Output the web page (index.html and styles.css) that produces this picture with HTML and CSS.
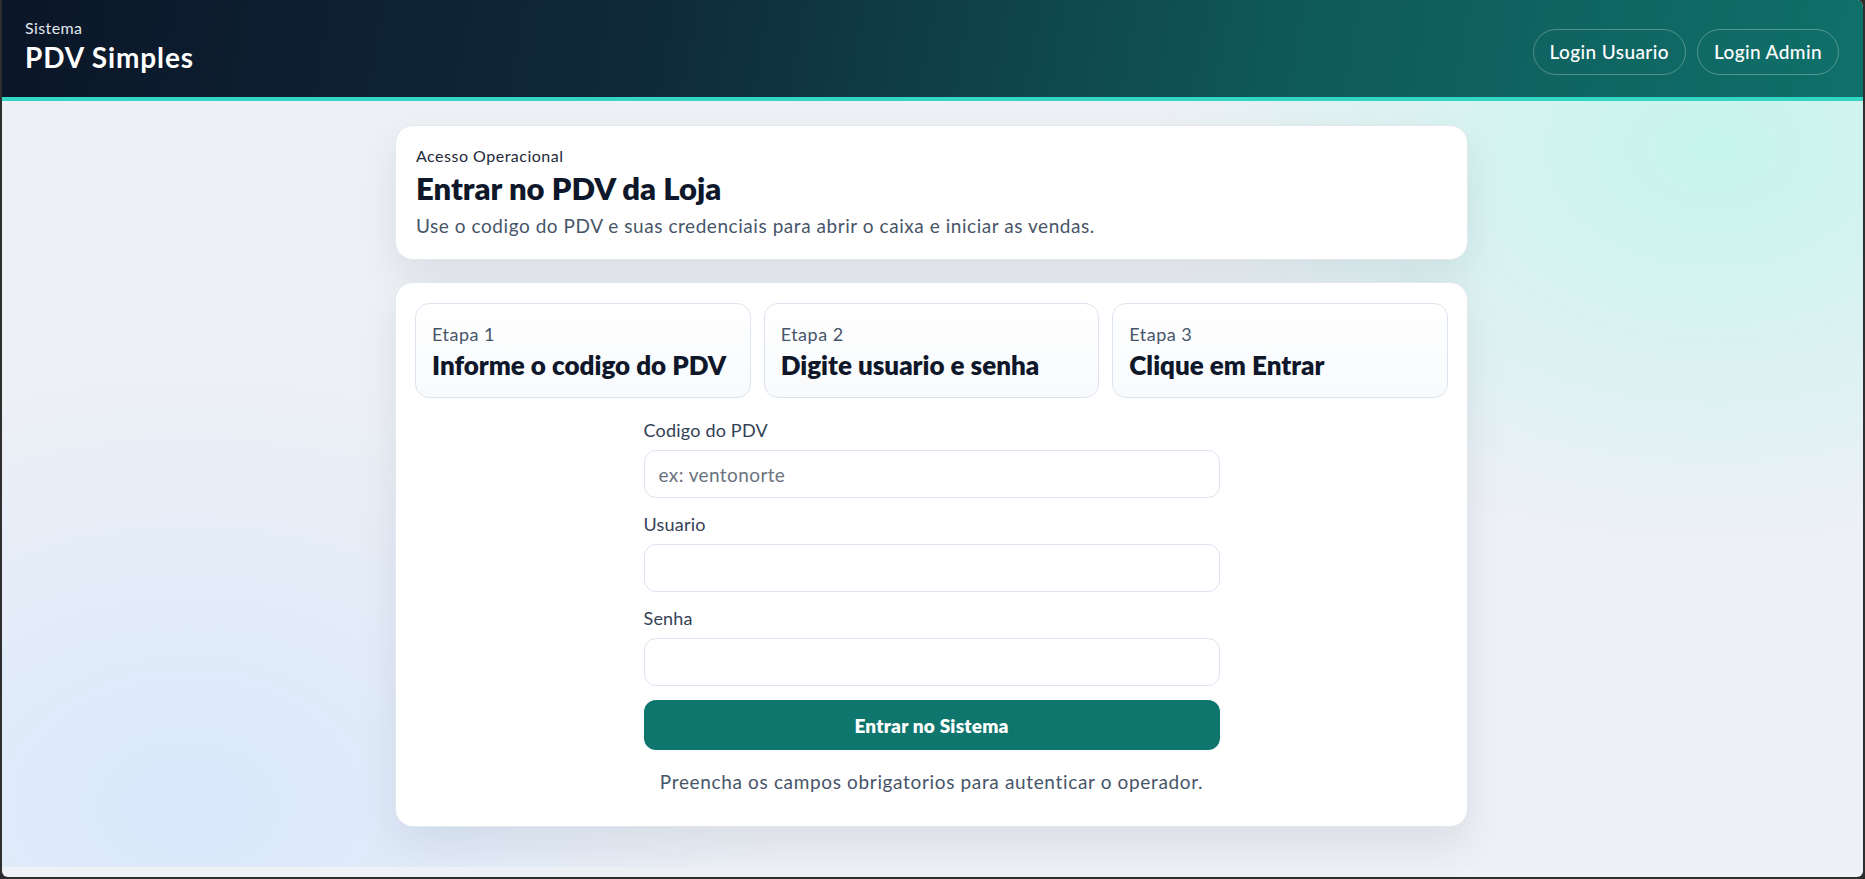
FILE: index.html
```html
<!DOCTYPE html>
<html lang="pt-BR">
<head>
<meta charset="utf-8">
<title>PDV Simples</title>
<link rel="stylesheet" href="styles.css">
</head>
<body>
<div class="window">
  <header class="topbar">
    <div class="brand">
      <div class="brand-kicker">Sistema</div>
      <div class="brand-name">PDV Simples</div>
    </div>
    <nav class="top-actions">
      <button class="pill">Login Usuario</button>
      <button class="pill">Login Admin</button>
    </nav>
  </header>
  <main class="page">
    <div class="container">
      <section class="card intro">
        <div class="kicker">Acesso Operacional</div>
        <h1 class="title">Entrar no PDV da Loja</h1>
        <p class="subtitle">Use o codigo do PDV e suas credenciais para abrir o caixa e iniciar as vendas.</p>
      </section>
      <section class="card login">
        <div class="steps">
          <div class="step">
            <div class="step-label">Etapa 1</div>
            <div class="step-title">Informe o codigo do PDV</div>
          </div>
          <div class="step">
            <div class="step-label">Etapa 2</div>
            <div class="step-title">Digite usuario e senha</div>
          </div>
          <div class="step">
            <div class="step-label">Etapa 3</div>
            <div class="step-title">Clique em Entrar</div>
          </div>
        </div>
        <form class="form">
          <label class="field">
            <span class="field-label">Codigo do PDV</span>
            <input class="input" type="text" placeholder="ex: ventonorte">
          </label>
          <label class="field">
            <span class="field-label">Usuario</span>
            <input class="input" type="text">
          </label>
          <label class="field">
            <span class="field-label">Senha</span>
            <input class="input" type="password">
          </label>
          <button class="submit" type="button">Entrar no Sistema</button>
          <p class="hint">Preencha os campos obrigatorios para autenticar o operador.</p>
        </form>
      </section>
    </div>
  </main>
</div>
</body>
</html>
```
FILE: styles.css
```css
* { box-sizing: border-box; }
html, body { margin: 0; padding: 0; background: #2b2b2b; }
body { font-family: Lato, "Noto Sans", sans-serif; color: #0f172a; }

.window {
  height: 879px;
  border: 2px solid #2e2e2e;
  border-top: 0;
  border-radius: 0 8px 8px 8px;
  overflow: hidden;
  background: #eef2f7;
  display: flex;
  flex-direction: column;
}

.topbar {
  height: 101px;
  flex: none;
  display: flex;
  align-items: center;
  justify-content: space-between;
  padding: 0 24px 4px 23px;
  background: linear-gradient(100deg, #0b1628 0%, #0f2a3a 35%, #0f5a5b 70%, #0f706a 100%);
  border-bottom: 4px solid #33d6c4;
  color: #fff;
}
.brand { display: flex; flex-direction: column; gap: 3px; margin-top: -1px; }
.brand-kicker { font-size: 16px; color: #e2e8f0; letter-spacing: 0.4px; }
.brand-name { font-size: 28px; font-weight: 700; letter-spacing: 0.9px; }

.top-actions { display: flex; gap: 11px; margin-top: 10px; }
.pill {
  font-family: inherit;
  font-size: 19px;
  font-weight: 500;
  letter-spacing: 0.4px;
  color: #fff;
  background: transparent;
  border: 1px solid rgba(255,255,255,0.28);
  border-radius: 999px;
  height: 46px;
  padding: 0 16px;
}

.page {
  height: 766px;
  flex: none;
  background:
    radial-gradient(ellipse 560px 400px at 92% 6%, rgba(196,245,236,0.95), rgba(196,245,236,0) 100%),
    radial-gradient(ellipse 600px 440px at 10% 92%, rgba(217,232,252,1), rgba(217,232,252,0) 100%),
    #edf0f5;
  padding-top: 24px;
}
.container {
  width: 1073px;
  margin: 0 auto;
  display: flex;
  flex-direction: column;
  gap: 22px;
  transform: translateX(-1px);
}
.card {
  background: #fff;
  border: 1px solid #e3e8f0;
  border-radius: 18px;
  box-shadow: 0 18px 40px rgba(15, 23, 42, 0.08);
}
.intro { padding: 20px 20px 18px; height: 135px; }
.kicker { font-size: 16px; color: #1e293b; letter-spacing: 0.5px; }
.title { margin: 5px 0 8px; font-size: 31px; font-weight: 800; letter-spacing: 0; color: #0f172a; line-height: 36px; }
.subtitle { margin: 0; font-size: 19px; color: #475569; letter-spacing: 0.55px; }

.login { padding: 20px 19px 32px; }
.steps { display: grid; grid-template-columns: repeat(3, 1fr); gap: 13px; }
.step {
  height: 95px;
  border: 1px solid #dde4ef;
  border-radius: 14px;
  background: linear-gradient(180deg, #ffffff, #f8fafc);
  padding: 19px 16px;
}
.step-label { font-size: 18px; color: #475569; letter-spacing: 0.5px; }
.step-title { margin-top: 4px; font-size: 26px; font-weight: 800; color: #0f172a; letter-spacing: 0; }

.form {
  width: 576px;
  margin: 21px auto 0;
  display: flex;
  flex-direction: column;
}
.field { display: flex; flex-direction: column; gap: 8px; margin-bottom: 15px; }
.field-label { font-size: 18px; color: #334155; line-height: 23px; letter-spacing: 0.2px; }
.input {
  height: 48px;
  border: 1px solid #dbe3ef;
  border-radius: 12px;
  padding: 0 14px;
  font-family: inherit;
  font-size: 19px;
  letter-spacing: 0.4px;
  color: #0f172a;
  background: #fff;
}
.input::placeholder { color: #6b7280; }
.submit {
  margin-top: -1px;
  height: 50px;
  border: 0;
  border-radius: 12px;
  background: #0f766e;
  color: #fff;
  font-family: inherit;
  font-size: 19px;
  font-weight: 800;
  letter-spacing: 0.2px;
}
.hint { margin: 20px 0 0; text-align: center; font-size: 19px; color: #475569; line-height: 24px; letter-spacing: 0.65px; }
```
